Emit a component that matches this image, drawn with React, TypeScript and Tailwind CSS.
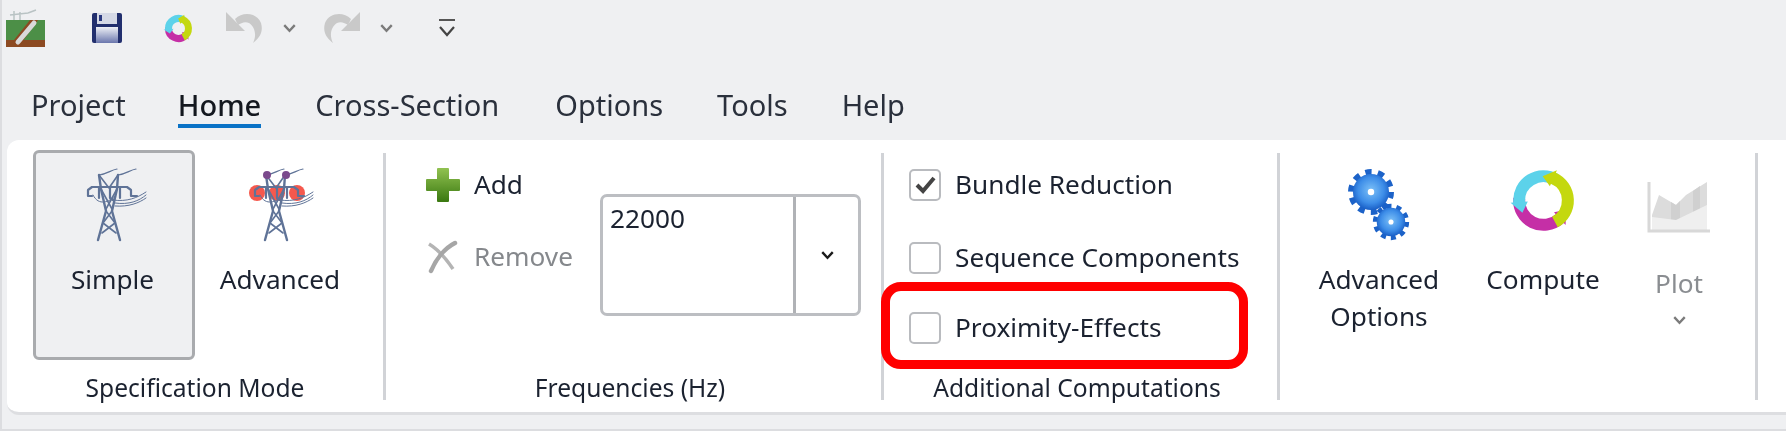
const TOWER = '#5f7397'

function Tower({ advanced }: { advanced?: boolean }) {
  return (
    <svg width="64" height="78" viewBox="0 0 64 78" fill="none" className="overflow-visible">
      {advanced && (
        <g fill="#f4473a" opacity="0.9">
          <circle cx="5" cy="28" r="8" />
          <circle cx="25" cy="28" r="8" />
          <circle cx="45" cy="28" r="8" />
        </g>
      )}
      <g stroke={TOWER} strokeWidth="1.6" strokeLinejoin="round" strokeLinecap="round">
        <path d="M13 75 L21 46 L16 24 L14 10 M35 75 L27 46 L32 24 L33 10" strokeWidth="2.4" />
        <path d="M21 46 L30 58 L17 68 M27 46 L18 58 L31 68 M16 24 L27 44 M32 24 L21 44 M14 10 L24 23 M33 10 L24 23" />
        <path d="M3 31 V25 L7 22 H42 L46 25 V31 H52 M3 31 H7 M14 23 V33 M25 23 V33 L28 35 M35 23 V33" strokeWidth="2.2" />
        <path d="M14 10 C22 9 26 5 32 4 M33 10 C41 9 45 5 51 4" strokeWidth="1.2" />
        <path d="M8 30 C14 42 24 36 30 32 M28 35 C42 37 52 33 61 27 M30 38 C44 40 54 36 61 30 M30 41 C44 42 54 38 61 33" strokeWidth="1" />
      </g>
      {advanced && (
        <g fill="#7b4a8c">
          <circle cx="15" cy="10" r="4" />
          <circle cx="34" cy="10" r="4" />
        </g>
      )}
    </svg>
  )
}

function polar(r: number, deg: number, c: number) {
  const a = (deg * Math.PI) / 180
  return `${(c + r * Math.cos(a)).toFixed(2)} ${(c + r * Math.sin(a)).toFixed(2)}`
}

function RingArrow({ from, to, color, c, r, w }: { from: number; to: number; color: string; c: number; r: number; w: number }) {
  const body = `M${polar(r + w / 2, from, c)} A${r + w / 2} ${r + w / 2} 0 0 0 ${polar(r + w / 2, to, c)} L${polar(r + w * 0.72, to, c)} L${polar(r, to - 26, c)} L${polar(r - w * 0.72, to, c)} L${polar(r - w / 2, to, c)} A${r - w / 2} ${r - w / 2} 0 0 1 ${polar(r - w / 2, from, c)} Z`
  return <path d={body} fill={color} />
}

function Ring({ size, w }: { size: number; w: number }) {
  const c = size / 2
  const r = c - w * 0.72 - 0.5
  return (
    <svg width={size} height={size} viewBox={`0 0 ${size} ${size}`}>
      <RingArrow from={185} to={48} color="#c52fa6" c={c} r={r} w={w} />
      <RingArrow from={300} to={176} color="#5cd2ea" c={c} r={r} w={w} />
      <RingArrow from={62} to={-66} color="#c4d80f" c={c} r={r} w={w} />
    </svg>
  )
}

function Gear({ cx, cy, r, id }: { cx: number; cy: number; r: number; id: string }) {
  const circ = 2 * Math.PI * r
  return (
    <g>
      <circle cx={cx} cy={cy} r={r} fill="none" stroke="#1c62c8" strokeWidth={r * 0.42} strokeDasharray={`${circ / 20} ${circ / 20}`} />
      <circle cx={cx} cy={cy} r={r * 0.95} fill={`url(#${id})`} />
      <circle cx={cx} cy={cy} r={r * 0.17} fill="#ffffff" />
    </g>
  )
}

function Gears() {
  return (
    <svg width="64" height="78" viewBox="0 0 64 78">
      <defs>
        <radialGradient id="gearA" cx="0.5" cy="0.45" r="0.6">
          <stop offset="0" stopColor="#7cc0f7" />
          <stop offset="0.6" stopColor="#3d8de8" />
          <stop offset="1" stopColor="#0f52bd" />
        </radialGradient>
      </defs>
      <Gear cx={24} cy={27} r={19} id="gearA" />
      <Gear cx={44} cy={57} r={15} id="gearA" />
    </svg>
  )
}

function PlotIcon() {
  return (
    <svg width="64" height="78" viewBox="0 0 64 78">
      <path d="M5 66 V50 L12 30 L29 40 L39 30 L60 17 V66 Z" fill="#dcdcdc" />
      <path d="M24 37 L29 40 L33 36 V66 H24 Z M46 26 L53 21 V66 H46 Z" fill="#d0d0d0" />
      <path d="M5 66 V52 L29 55 L60 40 V66 Z" fill="#efefef" />
      <path d="M2 17 V66 H63" fill="none" stroke="#d8d8d8" strokeWidth="3" />
    </svg>
  )
}

function Chevron({ color, size = 15 }: { color: string; size?: number }) {
  return (
    <svg width={size} height={size * 0.7} viewBox="0 0 14 10" fill="none">
      <path d="M2 2 L7 7.5 L12 2" stroke={color} strokeWidth="2.2" />
    </svg>
  )
}

function LargeButton({ icon, children, className }: { icon: React.ReactNode; children: React.ReactNode; className: string }) {
  return (
    <div className={`flex flex-col items-center ${className}`}>
      {icon}
      <div className="mt-[18px] text-center leading-[37px]">{children}</div>
    </div>
  )
}

function Separator() {
  return <div className="mt-[3px] h-[247px] w-[3px] shrink-0 bg-[#d1d3d7]" />
}

function GroupLabel({ children, className }: { children: string; className?: string }) {
  return <div className={`h-[34px] text-center text-[24.6px] leading-[34px] ${className ?? ''}`}>{children}</div>
}

function Check({ label, checked, className }: { label: string; checked?: boolean; className?: string }) {
  return (
    <div className={`flex h-[34px] items-center gap-[14px] ${className ?? ''}`}>
      <div className="flex h-[32px] w-[32px] items-center justify-center rounded-[5px] border-2 border-[#b9bbbf] bg-white">
        {checked && (
          <svg width="22" height="20" viewBox="0 0 22 20" fill="none">
            <path d="M3 10 L9 16 L20 3" stroke="#444444" strokeWidth="4" />
          </svg>
        )}
      </div>
      <span>{label}</span>
    </div>
  )
}

export default function App() {
  return (
    <div className="h-[431px] w-[1786px] overflow-hidden border-b-2 border-l-2 border-[#dcdde0] bg-[#eff0f2] font-['Noto_Sans',sans-serif] text-[#1b2230] blur-[0.5px]">
      {/* Quick access */}
      <div className="flex h-[56px] items-center">
        <svg width="40" height="38" viewBox="0 0 40 38" className="ml-[4px]">
          <path d="M8 14 V2 M14 14 V3 M4 6 L22 4 M22 4 L30 1" stroke="#b9c3c4" strokeWidth="1.5" fill="none" />
          <rect x="0" y="11" width="39" height="20" fill="#4c8f47" />
          <rect x="0" y="31" width="39" height="7" fill="#8c4a22" />
          <path d="M4 36 L24 11 H32 L14 36 Z" fill="#8c4a22" />
          <path d="M12 33 L28 14" stroke="#d9d9d9" strokeWidth="5" strokeLinecap="round" />
        </svg>
        <svg width="32" height="32" viewBox="0 0 32 32" className="ml-[45px]">
          <defs>
            <linearGradient id="saveBody" x1="0" y1="0" x2="0" y2="1">
              <stop offset="0" stopColor="#eef0f6" />
              <stop offset="1" stopColor="#6a76ad" />
            </linearGradient>
          </defs>
          <rect x="1" y="1" width="30" height="30" rx="2" fill="#222f6e" />
          <rect x="6" y="1" width="20" height="11" fill="#d5d9e6" />
          <rect x="8" y="3" width="3" height="6" fill="#2b3a80" />
          <rect x="5" y="15" width="22" height="16" fill="url(#saveBody)" />
        </svg>
        <div className="ml-[40px]">
          <Ring size={31} w={7} />
        </div>
        <svg width="38" height="38" viewBox="0 0 38 38" className="ml-[31px]">
          <path d="M1 22 V3 L20 22 Z" fill="#c9c9c9" />
          <path d="M10 10 C18 2 32 4 36 14 C39 24 33 30 28 34 C32 26 30 18 24 14 C20 12 16 14 13 16 Z" fill="#c9c9c9" />
        </svg>
        <div className="ml-[19px]">
          <Chevron color="#7b7b7b" />
        </div>
        <svg width="38" height="38" viewBox="0 0 38 38" className="ml-[26px]">
          <path d="M37 22 V3 L18 22 Z" fill="#c9c9c9" />
          <path d="M28 10 C20 2 6 4 2 14 C-1 24 5 30 10 34 C6 26 8 18 14 14 C18 12 22 14 25 16 Z" fill="#c9c9c9" />
        </svg>
        <div className="ml-[18px]">
          <Chevron color="#7b7b7b" />
        </div>
        <svg width="18" height="20" viewBox="0 0 18 20" fill="none" className="ml-[44px]">
          <path d="M1 2 H17" stroke="#555555" strokeWidth="2" />
          <path d="M2 9 L9 17 L16 9" stroke="#444444" strokeWidth="2.2" />
        </svg>
      </div>

      {/* Menu */}
      <div className="flex h-[82px] text-[29px] text-[#2a303c]">
        <div className="ml-[29px] mt-[29px] leading-[40px]">Project</div>
        <div className="ml-[52px] mt-[29px] flex h-[43px] flex-col border-b-[4px] border-[#0a72c6] font-medium leading-[40px] text-[#14181f]">Home</div>
        <div className="ml-[54px] mt-[29px] leading-[40px]">Cross-Section</div>
        <div className="ml-[56px] mt-[29px] leading-[40px]">Options</div>
        <div className="ml-[54px] mt-[29px] leading-[40px]">Tools</div>
        <div className="ml-[54px] mt-[29px] leading-[40px]">Help</div>
      </div>

      {/* Ribbon */}
      <div className="ml-[5px] mt-[2px] flex h-[275px] items-start rounded-l-[12px] border-b-[3px] border-[#dddee1] bg-white pt-[10px] text-[26.2px]">
        <div className="flex h-[255px] w-[376px] shrink-0 flex-col justify-between">
          <div className="flex pl-[26px]">
            <LargeButton icon={<div className="ml-[9px]"><Tower /></div>} className="h-[210px] w-[162px] rounded-[6px] border-[3px] border-[#a9abae] bg-[#eff0f2] pr-[3px] pt-[12px]">
              Simple
            </LargeButton>
            <LargeButton icon={<div className="ml-[8px]"><Tower advanced /></div>} className="ml-[10px] w-[150px] pt-[15px]">
              Advanced
            </LargeButton>
          </div>
          <GroupLabel>Specification Mode</GroupLabel>
        </div>
        <Separator />

        <div className="flex h-[255px] w-[495px] shrink-0 flex-col justify-between">
          <div className="flex pl-[39px]">
            <div className="flex w-[175px] shrink-0 flex-col gap-[38px] pt-[18px]">
              <div className="flex h-[34px] items-center">
                <svg width="36" height="36" viewBox="0 0 36 36">
                  <defs>
                    <linearGradient id="plusFill" x1="0" y1="0" x2="0" y2="1">
                      <stop offset="0" stopColor="#8fc04f" />
                      <stop offset="1" stopColor="#3c7a12" />
                    </linearGradient>
                  </defs>
                  <path d="M13 2 H23 V13 H34 V23 H23 V34 H13 V23 H2 V13 H13 Z" fill="url(#plusFill)" stroke="url(#plusFill)" strokeWidth="2" strokeLinejoin="round" />
                </svg>
                <span className="ml-[13px]">Add</span>
              </div>
              <div className="flex h-[34px] items-center text-[#85888c]">
                <svg width="36" height="34" viewBox="0 0 36 34" fill="none">
                  <path d="M4 4 C14 10 22 20 28 29" stroke="#b4b4b4" strokeWidth="3.5" />
                  <path d="M30 3 C20 8 11 19 6 31" stroke="#a6a6a6" strokeWidth="4.5" strokeLinecap="round" />
                </svg>
                <span className="ml-[13px]">Remove</span>
              </div>
            </div>
            <div className="mt-[44px] flex h-[122px] w-[261px] shrink-0 rounded-[7px] border-[3px] border-[#bcbec2]">
              <div className="flex-1 pl-[7px] pt-[4px] leading-[34px]">22000</div>
              <div className="flex w-[65px] items-center justify-center border-l-[3px] border-[#b0b2b6]">
                <Chevron color="#1b1b1b" />
              </div>
            </div>
          </div>
          <GroupLabel className="pr-[7px]">Frequencies (Hz)</GroupLabel>
        </div>
        <Separator />

        <div className="relative flex h-[255px] w-[393px] shrink-0 flex-col justify-between">
          <div className="flex flex-col pl-[25px] pt-[18px]">
            <Check label="Bundle Reduction" checked />
            <Check label="Sequence Components" className="mt-[39px]" />
            <Check label="Proximity-Effects" className="mt-[36px]" />
          </div>
          <GroupLabel className="pr-[7px]">Additional Computations</GroupLabel>
          <div className="absolute left-[-3px] top-[132px] h-[87px] w-[367px] rounded-[20px] border-[9px] border-[#ff0000]" />
        </div>
        <Separator />

        <div className="flex w-[475px] shrink-0 pl-[29px]">
          <LargeButton icon={<Gears />} className="w-[140px] pt-[15px]">
            Advanced
            <br />
            Options
          </LargeButton>
          <LargeButton icon={<div className="flex h-[78px] items-start pt-[2px]"><Ring size={67} w={12} /></div>} className="ml-[29px] w-[130px] pt-[15px]">
            Compute
          </LargeButton>
          <div className="ml-[21px] flex w-[100px] flex-col items-center pt-[15px] text-[#8a8d91]">
            <PlotIcon />
            <div className="mt-[21px] leading-[38px]">Plot</div>
            <div className="mt-[13px]">
              <Chevron color="#7b7b7b" />
            </div>
          </div>
        </div>
        <Separator />
      </div>
    </div>
  )
}
